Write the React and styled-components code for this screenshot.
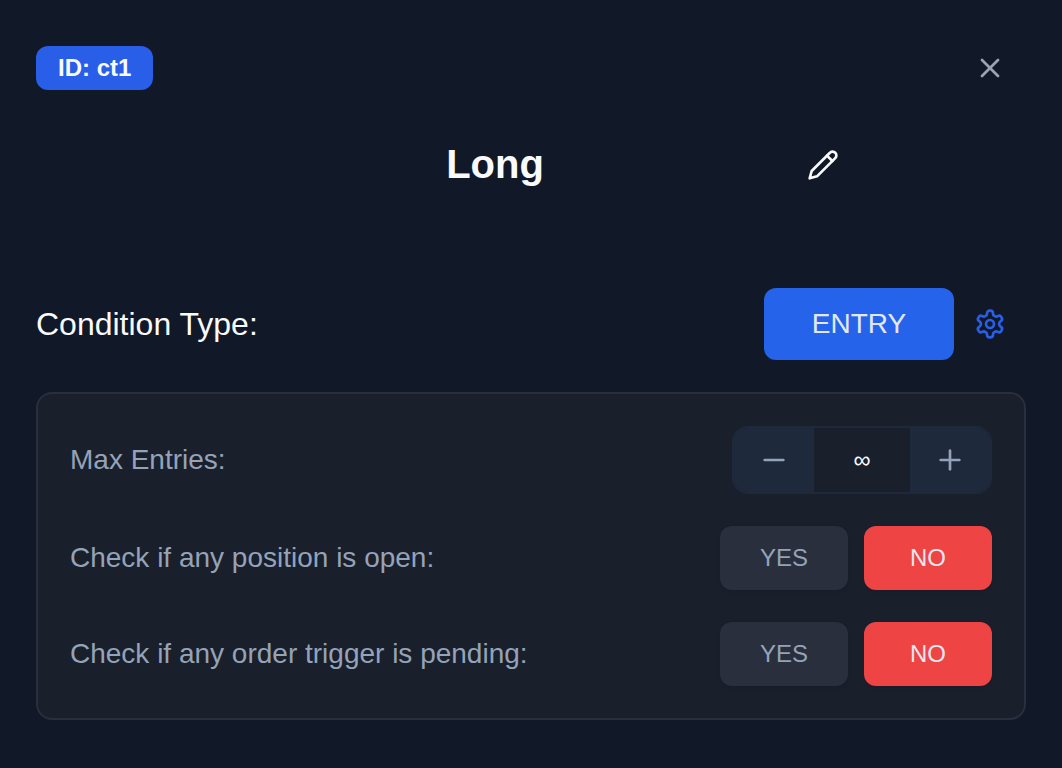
import React, { useState } from 'react';
import styled, { createGlobalStyle } from 'styled-components';
import { Minus, Plus, X } from 'lucide-react';

const GlobalStyle = createGlobalStyle`
  * {
    box-sizing: border-box;
  }

  body {
    margin: 0;
    background-color: #111827;
    font-family: "Liberation Sans", Arial, Helvetica, sans-serif;
  }

  button, input {
    font-family: inherit;
  }
`

const Card = styled.main`
  padding: 32px 36px 48px;
  color: #f8fafc;
`

const Header = styled.header`
  display: flex;
  align-items: center;
  justify-content: space-between;
`

const Badge = styled.span`
  background-color: #295ee8;
  border-radius: 12px;
  color: #f8fafc;
  font-size: 24px;
  font-weight: bold;
  line-height: 32px;
  padding: 6px 22px;
`

const Icon = styled.svg`
  width: 32px;
  height: 32px;
  fill: none;
  stroke: currentColor;
  stroke-width: 2;
  stroke-linecap: round;
  stroke-linejoin: round;
`

const IconButton = styled.button`
  display: flex;
  align-items: center;
  justify-content: center;
  width: ${props => props.$small ? '48px' : '72px'};
  height: ${props => props.$small ? '48px' : '72px'};
  padding: 0;
  border: none;
  background: none;
  color: ${props => props.$color};
  cursor: pointer;
`

const TitleRow = styled.div`
  display: flex;
  align-items: center;
  justify-content: center;
  gap: 24px;
  padding: 37px 0 99px;
`

const Title = styled.h1`
  flex: 0 1 560px;
  margin: 0;
  padding-bottom: 2px;
  font-size: 40px;
  font-weight: bold;
  line-height: 46px;
  text-align: center;
`

const TypeRow = styled.div`
  display: flex;
  align-items: center;
  margin-bottom: 32px;
`

const TypeLabel = styled.span`
  flex: 1;
  font-size: 32px;
  line-height: 48px;
`

const TypeButton = styled.button`
  width: 190px;
  height: 72px;
  border: none;
  border-radius: 12px;
  background-color: #2563eb;
  color: #e2e8f0;
  font-size: 28px;
  cursor: pointer;
`

const Panel = styled.section`
  display: flex;
  flex-direction: column;
  gap: 32px;
  padding: 32px;
  border: 2px solid #2a2f3d;
  border-radius: 16px;
  background-color: #1a1f2c;
`

const Row = styled.div`
  display: flex;
  align-items: center;
  justify-content: space-between;
`

const Label = styled.label`
  color: #94a3b8;
  font-size: 28px;
  line-height: 40px;
`

const Stepper = styled.div`
  display: flex;
  height: 68px;
  border: 2px solid #1e293b;
  border-radius: 16px;
  overflow: hidden;
`

const StepButton = styled.button`
  display: flex;
  align-items: center;
  justify-content: center;
  width: 80px;
  padding: 0;
  border: none;
  background-color: #1e293b;
  color: #94a3b8;
  cursor: pointer;
`

const StepValue = styled.input`
  width: 96px;
  padding: 0;
  border: none;
  background: none;
  color: #f8fafc;
  font-size: 24px;
  text-align: center;
`

const Choices = styled.div`
  display: flex;
  gap: 16px;
`

const Choice = styled.button`
  width: 128px;
  height: 64px;
  border: none;
  border-radius: 12px;
  background-color: ${props => props.$active ? props.$color : '#2a2f3d'};
  box-shadow: 0 2px 4px rgba(0, 0, 0, 0.1);
  color: ${props => props.$active ? '#e2e8f0' : '#94a3b8'};
  font-size: 24px;
  cursor: pointer;
`

const PencilIcon = () => (
  <Icon viewBox="0 0 24 24" aria-hidden="true">
    <path d="M17 3a2.85 2.83 0 1 1 4 4L7.5 20.5 2 22l1.5-5.5Z" />
    <path d="m15 5 4 4" />
  </Icon>
)

const GearIcon = () => (
  <Icon viewBox="0 0 24 24" aria-hidden="true">
    <path d="M12.22 2h-.44a2 2 0 0 0-2 2v.18a2 2 0 0 1-1 1.73l-.43.25a2 2 0 0 1-2 0l-.15-.08a2 2 0 0 0-2.73.73l-.22.38a2 2 0 0 0 .73 2.73l.15.1a2 2 0 0 1 1 1.72v.51a2 2 0 0 1-1 1.74l-.15.09a2 2 0 0 0-.73 2.73l.22.38a2 2 0 0 0 2.73.73l.15-.08a2 2 0 0 1 2 0l.43.25a2 2 0 0 1 1 1.73V20a2 2 0 0 0 2 2h.44a2 2 0 0 0 2-2v-.18a2 2 0 0 1 1-1.73l.43-.25a2 2 0 0 1 2 0l.15.08a2 2 0 0 0 2.73-.73l.22-.39a2 2 0 0 0-.73-2.73l-.15-.08a2 2 0 0 1-1-1.74v-.5a2 2 0 0 1 1-1.74l.15-.09a2 2 0 0 0 .73-2.73l-.22-.38a2 2 0 0 0-2.73-.73l-.15.08a2 2 0 0 1-2 0l-.43-.25a2 2 0 0 1-1-1.73V4a2 2 0 0 0-2-2z" />
    <circle cx="12" cy="12" r="3" />
  </Icon>
)

const YesNo = ({ id, label }) => {
  const [value, setValue] = useState(false);

  return (
    <Row>
      <Label as="span" id={id}>{label}</Label>
      <Choices role="group" aria-labelledby={id}>
        <Choice $color="#2563eb" $active={value} aria-pressed={value} onClick={() => setValue(true)}>YES</Choice>
        <Choice $color="#ef4444" $active={!value} aria-pressed={!value} onClick={() => setValue(false)}>NO</Choice>
      </Choices>
    </Row>
  );
}

const App = () => {
  // 0 means no limit
  const [entries, setEntries] = useState(0);
  const [open, setOpen] = useState(true);

  return (
    <>
      <GlobalStyle />
      <Card>
        <Header>
          <Badge>ID: ct1</Badge>
          <IconButton $color="#9ca3af" aria-label="Close"><X size={32} /></IconButton>
        </Header>
        <TitleRow>
          <Title>Long</Title>
          <IconButton $small $color="#f8fafc" aria-label="Edit name"><PencilIcon /></IconButton>
        </TitleRow>
        <TypeRow>
          <TypeLabel id="condition-type">Condition Type:</TypeLabel>
          <TypeButton aria-describedby="condition-type">ENTRY</TypeButton>
          <IconButton $color="#295ee8" aria-label="Settings" aria-expanded={open} onClick={() => setOpen(!open)}>
            <GearIcon />
          </IconButton>
        </TypeRow>
        {open && (
          <Panel>
            <Row>
              <Label htmlFor="max-entries">Max Entries:</Label>
              <Stepper>
                <StepButton aria-label="Decrease" onClick={() => setEntries(Math.max(0, entries - 1))}><Minus size={32} /></StepButton>
                <StepValue id="max-entries" readOnly value={entries === 0 ? '∞' : entries} />
                <StepButton aria-label="Increase" onClick={() => setEntries(entries + 1)}><Plus size={32} /></StepButton>
              </Stepper>
            </Row>
            <YesNo id="position-open" label="Check if any position is open:" />
            <YesNo id="trigger-pending" label="Check if any order trigger is pending:" />
          </Panel>
        )}
      </Card>
    </>
  );
}

export default App;
